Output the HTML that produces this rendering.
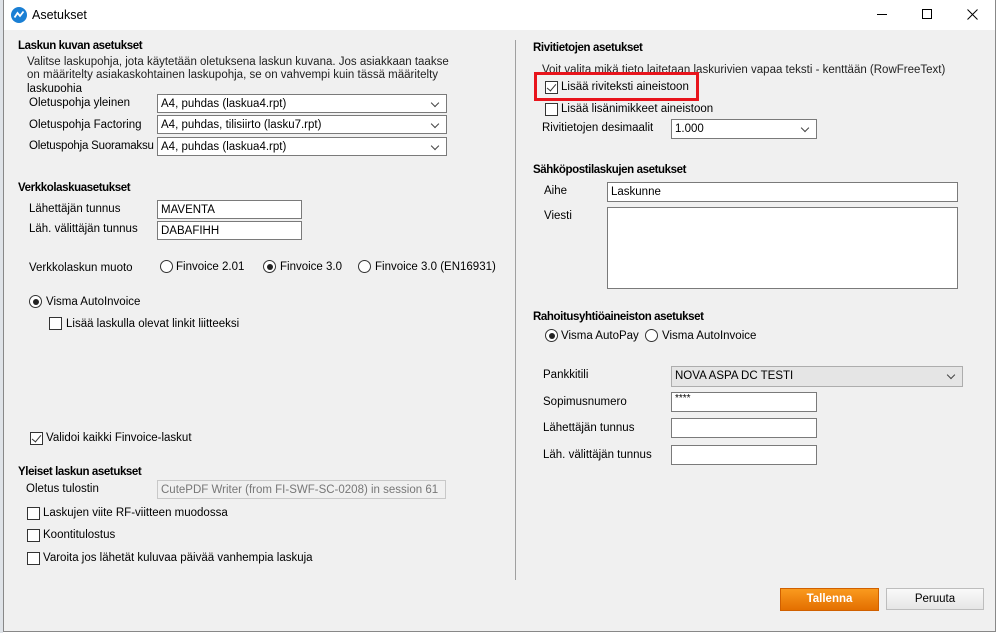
<!DOCTYPE html>
<html><head><meta charset="utf-8"><style>
*{box-sizing:border-box;margin:0;padding:0}
body{width:998px;height:633px;overflow:hidden;background:#fff;font-family:"Liberation Sans",sans-serif;font-size:11.5px;color:#000;position:relative}
.a{position:absolute;white-space:nowrap;line-height:14px}
.b{font-weight:bold;letter-spacing:-0.4px}
.box{position:absolute;background:#fff;border:1px solid #7a7a7a;white-space:nowrap;overflow:hidden;line-height:14px}
.cmb{position:absolute;background:#fff;border:1px solid #7a7a7a;padding:2px 0 0 3px;line-height:14px;white-space:nowrap}
.cmb:after{content:"";position:absolute;right:8px;top:5px;width:5px;height:5px;border-right:1px solid #444;border-bottom:1px solid #444;transform:rotate(45deg)}
.cb{position:absolute;width:13px;height:13px;border:1px solid #333;background:#fff}
.cb.on:after{content:"";position:absolute;left:3px;top:0px;width:4px;height:8px;border-right:1.5px solid #333;border-bottom:1.5px solid #333;transform:rotate(40deg)}
.rd{position:absolute;width:13px;height:13px;border:1px solid #333;border-radius:50%;background:#fff}
.rd.on:after{content:"";position:absolute;left:2.5px;top:2.5px;width:6px;height:6px;border-radius:50%;background:#222}
</style></head><body>
<div style="position:absolute;left:0;top:0;width:3px;height:633px;background:#dfe3e8"></div>
<div style="position:absolute;left:3px;top:0;width:993px;height:632px;border-left:1px solid #888;border-right:1px solid #888;border-bottom:1px solid #888;background:#f0f0f0"></div>
<div style="position:absolute;left:4px;top:0;width:991px;height:30px;background:#fff"></div>
<svg style="position:absolute;left:11px;top:7px" width="16" height="16" viewBox="0 0 16 16"><circle cx="8" cy="8" r="8" fill="#1a7fd4"/><path d="M3.5 10.5 L6.5 6 L9 9 L12.5 4.5" stroke="#fff" stroke-width="1.8" fill="none"/></svg>
<div class="a" style="left:32px;top:8px;font-size:12.5px">Asetukset</div>
<div style="position:absolute;left:877px;top:14px;width:10px;height:1px;background:#000"></div>
<div style="position:absolute;left:922px;top:9px;width:10px;height:10px;border:1px solid #000"></div>
<svg style="position:absolute;left:967px;top:9px" width="11" height="11" viewBox="0 0 11 11"><path d="M0.5 0.5L10.5 10.5M10.5 0.5L0.5 10.5" stroke="#000" stroke-width="1"/></svg>

<div class="a b" style="left:18px;top:39px">Laskun kuvan asetukset</div>
<div class="a" style="left:27px;top:56px;line-height:13px;color:#222">Valitse laskupohja, jota käytetään oletuksena laskun kuvana. Jos asiakkaan taakse<br>on määritelty asiakaskohtainen laskupohja, se on vahvempi kuin tässä määritelty</div>
<div style="position:absolute;left:27px;top:82px;height:10px;overflow:hidden" class="a">laskupohja</div>
<div class="a" style="left:29px;top:96px">Oletuspohja yleinen</div>
<div class="cmb" style="left:157px;top:94px;width:290px;height:19px">A4, puhdas (laskua4.rpt)</div>
<div class="a" style="left:29px;top:118px">Oletuspohja Factoring</div>
<div class="cmb" style="left:157px;top:115px;width:290px;height:19px">A4, puhdas, tilisiirto (lasku7.rpt)</div>
<div class="a" style="left:29px;top:139px;letter-spacing:-0.2px">Oletuspohja Suoramaksu</div>
<div class="cmb" style="left:157px;top:137px;width:290px;height:19px">A4, puhdas (laskua4.rpt)</div>

<div class="a b" style="left:18px;top:181px">Verkkolaskuasetukset</div>
<div class="a" style="left:29px;top:202px">Lähettäjän tunnus</div>
<div class="box" style="left:157px;top:200px;width:145px;height:19px;padding:2px 3px">MAVENTA</div>
<div class="a" style="left:29px;top:222px">Läh. välittäjän tunnus</div>
<div class="box" style="left:157px;top:221px;width:145px;height:19px;padding:2px 3px">DABAFIHH</div>
<div class="a" style="left:29px;top:261px">Verkkolaskun muoto</div>
<div class="rd" style="left:160px;top:260px"></div><div class="a" style="left:176px;top:260px">Finvoice 2.01</div>
<div class="rd on" style="left:263px;top:260px"></div><div class="a" style="left:280px;top:260px">Finvoice 3.0</div>
<div class="rd" style="left:358px;top:260px"></div><div class="a" style="left:375px;top:260px">Finvoice 3.0 (EN16931)</div>
<div class="rd on" style="left:29px;top:295px"></div><div class="a" style="left:46px;top:295px">Visma AutoInvoice</div>
<div class="cb" style="left:49px;top:317px"></div><div class="a" style="left:66px;top:317px">Lisää laskulla olevat linkit liitteeksi</div>
<div class="cb on" style="left:30px;top:432px"></div><div class="a" style="left:46px;top:431px">Validoi kaikki Finvoice-laskut</div>

<div class="a b" style="left:18px;top:465px">Yleiset laskun asetukset</div>
<div class="a" style="left:26px;top:482px">Oletus tulostin</div>
<div style="position:absolute;left:157px;top:480px;width:289px;height:19px;border:1px solid #c8c8c8;background:#f0f0f0;color:#777;padding:2px 3px;line-height:14px;white-space:nowrap;overflow:hidden">CutePDF Writer (from FI-SWF-SC-0208) in session 61</div>
<div class="cb" style="left:27px;top:507px"></div><div class="a" style="left:43px;top:506px">Laskujen viite RF-viitteen muodossa</div>
<div class="cb" style="left:27px;top:529px"></div><div class="a" style="left:43px;top:528px">Koontitulostus</div>
<div class="cb" style="left:27px;top:552px"></div><div class="a" style="left:43px;top:551px">Varoita jos lähetät kuluvaa päivää vanhempia laskuja</div>

<div style="position:absolute;left:515px;top:40px;width:1px;height:540px;background:#a0a0a0"></div>
<div class="a b" style="left:533px;top:41px">Rivitietojen asetukset</div>
<div class="a" style="left:542px;top:63px;color:#222">Voit valita mikä tieto laitetaan laskurivien vapaa teksti - kenttään (RowFreeText)</div>
<div style="position:absolute;left:534px;top:72px;width:165px;height:29px;border:3px solid #e8141c"></div>
<div class="cb on" style="left:545px;top:81px"></div><div class="a" style="left:561px;top:80px">Lisää riviteksti aineistoon</div>
<div class="cb" style="left:545px;top:103px"></div><div class="a" style="left:561px;top:102px">Lisää lisänimikkeet aineistoon</div>
<div class="a" style="left:542px;top:121px">Rivitietojen desimaalit</div>
<div class="cmb" style="left:671px;top:119px;width:146px;height:20px">1.000</div>

<div class="a b" style="left:533px;top:163px">Sähköpostilaskujen asetukset</div>
<div class="a" style="left:544px;top:184px">Aihe</div>
<div class="box" style="left:607px;top:182px;width:351px;height:20px;padding:2px 3px">Laskunne</div>
<div class="a" style="left:544px;top:209px">Viesti</div>
<div class="box" style="left:607px;top:207px;width:351px;height:82px"></div>

<div class="a b" style="left:533px;top:310px">Rahoitusyhtiöaineiston asetukset</div>
<div class="rd on" style="left:545px;top:329px"></div><div class="a" style="left:561px;top:329px">Visma AutoPay</div>
<div class="rd" style="left:645px;top:329px"></div><div class="a" style="left:662px;top:329px">Visma AutoInvoice</div>
<div class="a" style="left:543px;top:368px">Pankkitili</div>
<div class="cmb" style="left:671px;top:366px;width:292px;height:21px;background:#e5e5e5;border-color:#adadad">NOVA ASPA DC TESTI</div>
<div class="a" style="left:543px;top:395px">Sopimusnumero</div>
<div class="box" style="left:671px;top:392px;width:146px;height:20px;padding:0 3px;line-height:12px;font-size:10px">****</div>
<div class="a" style="left:543px;top:421px">Lähettäjän tunnus</div>
<div class="box" style="left:671px;top:418px;width:146px;height:20px"></div>
<div class="a" style="left:543px;top:448px">Läh. välittäjän tunnus</div>
<div class="box" style="left:671px;top:445px;width:146px;height:20px"></div>

<div style="position:absolute;left:780px;top:588px;width:99px;height:23px;background:linear-gradient(#fa9a1e,#e36f00);border:1px solid #d06000;color:#fff;text-align:center;line-height:21px;font-weight:bold">Tallenna</div>
<div style="position:absolute;left:886px;top:588px;width:98px;height:22px;background:linear-gradient(#fafafa,#e6e6e6);border:1px solid #bdbdbd;text-align:center;line-height:20px">Peruuta</div>
</body></html>
